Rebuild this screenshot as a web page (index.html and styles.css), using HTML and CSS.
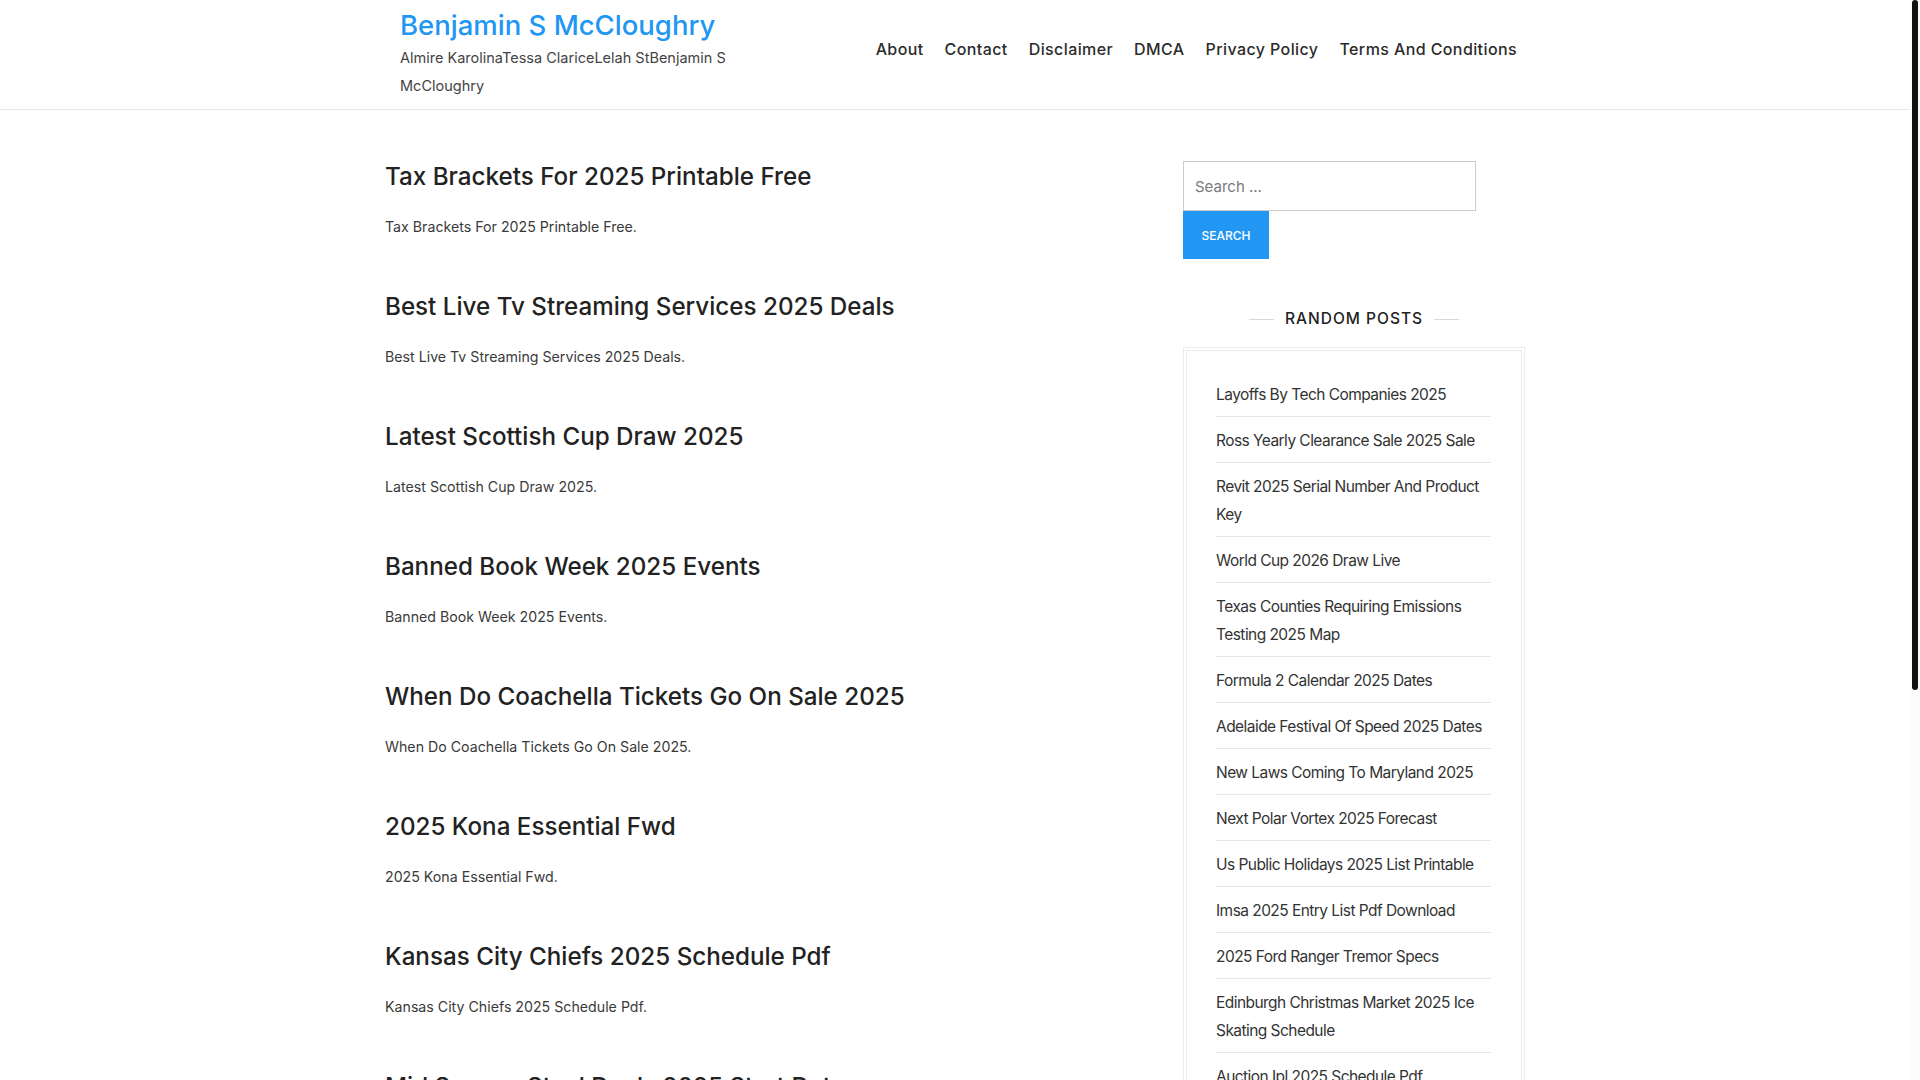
FILE: index.html
```html
<!DOCTYPE html>
<html lang="en">
<head>
<meta charset="utf-8">
<title>Benjamin S McCloughry</title>
<link rel="stylesheet" href="styles.css">
</head>
<body>
<div class="site">
  <header class="site-header">
    <div class="container header-inner">
      <div class="branding">
        <a class="site-title" href="#">Benjamin S McCloughry</a>
        <p class="site-desc">Almire KarolinaTessa ClariceLelah StBenjamin S McCloughry</p>
      </div>
      <nav class="main-nav">
        <a href="#">About</a>
        <a href="#">Contact</a>
        <a href="#">Disclaimer</a>
        <a href="#">DMCA</a>
        <a href="#">Privacy Policy</a>
        <a href="#">Terms And Conditions</a>
      </nav>
    </div>
  </header>

  <div class="container site-content">
    <main class="posts">
      <article class="post">
        <h2 class="post-title">Tax Brackets For 2025 Printable Free</h2>
        <p class="post-excerpt">Tax Brackets For 2025 Printable Free.</p>
      </article>
      <article class="post">
        <h2 class="post-title">Best Live Tv Streaming Services 2025 Deals</h2>
        <p class="post-excerpt">Best Live Tv Streaming Services 2025 Deals.</p>
      </article>
      <article class="post">
        <h2 class="post-title">Latest Scottish Cup Draw 2025</h2>
        <p class="post-excerpt">Latest Scottish Cup Draw 2025.</p>
      </article>
      <article class="post">
        <h2 class="post-title">Banned Book Week 2025 Events</h2>
        <p class="post-excerpt">Banned Book Week 2025 Events.</p>
      </article>
      <article class="post">
        <h2 class="post-title">When Do Coachella Tickets Go On Sale 2025</h2>
        <p class="post-excerpt">When Do Coachella Tickets Go On Sale 2025.</p>
      </article>
      <article class="post">
        <h2 class="post-title">2025 Kona Essential Fwd</h2>
        <p class="post-excerpt">2025 Kona Essential Fwd.</p>
      </article>
      <article class="post">
        <h2 class="post-title">Kansas City Chiefs 2025 Schedule Pdf</h2>
        <p class="post-excerpt">Kansas City Chiefs 2025 Schedule Pdf.</p>
      </article>
      <article class="post">
        <h2 class="post-title">Mid Season Steal Deals 2025 Start Date</h2>
        <p class="post-excerpt">Mid Season Steal Deals 2025 Start Date.</p>
      </article>
    </main>

    <aside class="sidebar">
      <form class="search-form">
        <input class="search-field" type="search" placeholder="Search …">
        <button class="search-submit" type="button">Search</button>
      </form>

      <section class="widget">
        <h3 class="widget-title"><span>Random Posts</span></h3>
        <div class="widget-frame">
          <ul class="widget-list">
            <li><a href="#">Layoffs By Tech Companies 2025</a></li>
            <li><a href="#">Ross Yearly Clearance Sale 2025 Sale</a></li>
            <li><a href="#">Revit 2025 Serial Number And Product Key</a></li>
            <li><a href="#">World Cup 2026 Draw Live</a></li>
            <li><a href="#">Texas Counties Requiring Emissions Testing 2025 Map</a></li>
            <li><a href="#">Formula 2 Calendar 2025 Dates</a></li>
            <li><a href="#">Adelaide Festival Of Speed 2025 Dates</a></li>
            <li><a href="#">New Laws Coming To Maryland 2025</a></li>
            <li><a href="#">Next Polar Vortex 2025 Forecast</a></li>
            <li><a href="#">Us Public Holidays 2025 List Printable</a></li>
            <li><a href="#">Imsa 2025 Entry List Pdf Download</a></li>
            <li><a href="#">2025 Ford Ranger Tremor Specs</a></li>
            <li><a href="#">Edinburgh Christmas Market 2025 Ice Skating Schedule</a></li>
            <li><a href="#">Auction Ipl 2025 Schedule Pdf</a></li>
          </ul>
        </div>
      </section>
    </aside>
  </div>
</div>
<div class="scrollbar" aria-hidden="true"><div class="scrollbar-thumb"></div></div>
</body>
</html>
```

FILE: styles.css
```css
* {
  box-sizing: border-box;
}

html {
  overflow: hidden;
}

body {
  margin: 0 10px 0 0;
  background: #fff;
  color: #3a3a3a;
  font-family: Inter, "Open Sans", sans-serif;
}

a {
  text-decoration: none;
  color: inherit;
}

/* Custom scrollbar drawn over the page edge */
.scrollbar {
  position: fixed;
  top: 0;
  right: 0;
  width: 10px;
  height: 100vh;
  background: #fbfbfb;
}

.scrollbar-thumb {
  margin: 0 2px;
  height: 690px;
  background: #111;
  border-radius: 3px;
}

.site {
  min-height: 1695px;
}

.container {
  width: 1140px;
  margin: 0 auto;
}

/* Header */
.site-header {
  border-bottom: 1px solid #e6e6e6;
  height: 110px;
}

.header-inner {
  display: flex;
  justify-content: space-between;
  align-items: flex-start;
  padding: 0 8px 0 15px;
}

.branding {
  width: 350px;
  padding-top: 8px;
}

.site-title {
  display: block;
  color: #2196f3;
  font-size: 27.5px;
  font-weight: 500;
  line-height: 34px;
}

.site-desc {
  margin: 2px 0 0;
  font-size: 14.5px;
  line-height: 28px;
  color: #444;
}

.main-nav {
  display: flex;
  gap: 21px;
  margin-top: 37px;
}

.main-nav a {
  font-size: 16px;
  line-height: 24px;
  font-weight: 500;
  letter-spacing: 0.4px;
  color: #2b2b2b;
}

/* Content */
.site-content {
  display: grid;
  grid-template-columns: 1fr 342px;
  column-gap: 56px;
  padding-top: 51px;
}

.post {
  margin-bottom: 51px;
}

.post-title {
  margin: 0 0 22px;
  font-size: 24.2px;
  line-height: 31px;
  font-weight: 500;
  color: #222;
}

.post-excerpt {
  margin: 0;
  font-size: 14.2px;
  line-height: 26px;
  color: #3a3a3a;
}

/* Sidebar */
.sidebar {
  padding-top: 0;
}

.search-form {
  display: flex;
  flex-direction: column;
  align-items: flex-start;
}

.search-field {
  width: 293px;
  height: 50px;
  border: 1px solid #cccccc;
  padding: 0 11px;
  font-family: inherit;
  font-size: 15px;
  color: #666;
  outline: none;
}

.search-field::placeholder {
  color: #7a7a7a;
}

.search-submit {
  width: 86px;
  height: 48px;
  border: 0;
  background: #2196f3;
  color: #fff;
  font-family: inherit;
  font-size: 12px;
  font-weight: 500;
  text-transform: uppercase;
  padding: 0;
}

.widget {
  margin-top: 48px;
}

.widget-title {
  margin: 0 0 16px;
  display: flex;
  align-items: center;
  justify-content: center;
  gap: 11px;
  font-size: 15.5px;
  line-height: 24px;
  font-weight: 500;
  letter-spacing: 1px;
  text-transform: uppercase;
  color: #222;
}

.widget-title::before,
.widget-title::after {
  content: "";
  width: 25px;
  height: 1px;
  background: #d9d9d9;
}

.widget-frame {
  border: 1px solid #ececec;
  padding: 2px;
}

.widget-list {
  list-style: none;
  margin: 0;
  border: 1px solid #ececec;
  padding: 20px 30px 0 29px;
}

.widget-list li {
  padding: 10px 0 7px;
  border-bottom: 1px solid #e6e6e6;
  font-size: 15.5px;
  line-height: 28px;
  letter-spacing: -0.55px;
  color: #333;
}
```
